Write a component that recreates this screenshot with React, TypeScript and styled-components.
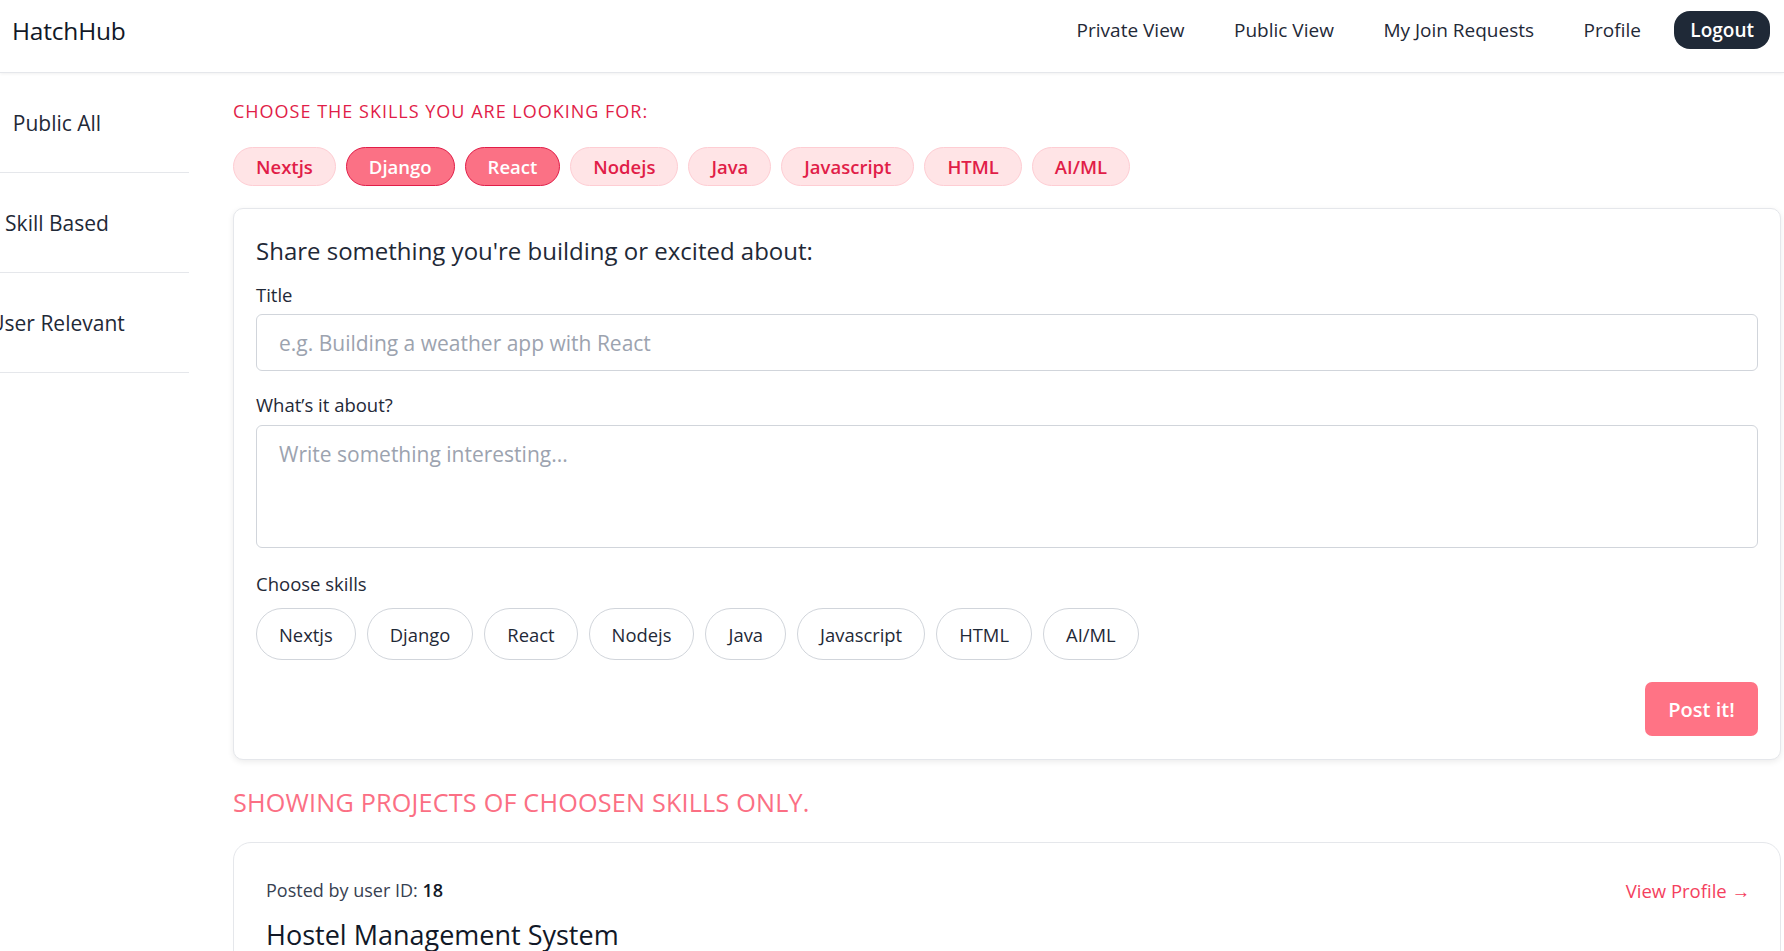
import React from "react";
import styled, { createGlobalStyle } from "styled-components";

const FONT = `"Open Sans", "Noto Sans", "Liberation Sans", sans-serif`;

const GlobalStyle = createGlobalStyle`
  html, body { margin: 0; padding: 0; background: #ffffff; }
  body { font-family: ${FONT}; color: #1f2937; }
  * { box-sizing: border-box; }
`;

const Header = styled.header`
  height: 73px;
  display: flex;
  align-items: flex-start;
  justify-content: space-between;
  padding: 11px 14px 0 12px;
  border-bottom: 1px solid #e5e7eb;
  box-shadow: 0 1px 3px rgba(0, 0, 0, 0.06);
  background: #fff;
`;

const Brand = styled.div`
  height: 38px;
  display: flex;
  align-items: center;
  font-size: 24.5px;
  font-weight: 500;
  color: #111827;
  letter-spacing: -0.2px;
`;

const Nav = styled.nav`
  display: flex;
  align-items: center;
  gap: 17.5px;
`;

const NavLink = styled.a<{ $dark?: boolean }>`
  font-size: 19px;
  color: ${(p) => (p.$dark ? "#ffffff" : "#1f2937")};
  background: ${(p) => (p.$dark ? "#1f2937" : "transparent")};
  padding: 0 16px;
  height: 38px;
  display: flex;
  align-items: center;
  border-radius: 16px;
  text-decoration: none;
  cursor: pointer;
  font-weight: ${(p) => (p.$dark ? 600 : 500)};
`;

const Layout = styled.div`
  display: flex;
  align-items: flex-start;
`;

const Sidebar = styled.aside`
  width: 189px;
  flex-shrink: 0;
  display: flex;
  flex-direction: column;
`;

const SideItem = styled.div`
  height: 100px;
  border-bottom: 1px solid #e5e7eb;
  display: flex;
  align-items: center;
`;

const SideLabel = styled.span`
  width: 114px;
  display: flex;
  justify-content: center;
  white-space: nowrap;
  font-size: 21px;
  color: #1f2937;
`;

const Main = styled.main`
  flex: 1;
  min-width: 0;
  padding: 24px 3px 40px 44px;
  display: flex;
  flex-direction: column;
`;

const FilterTitle = styled.h2`
  margin: 0;
  font-size: 18px;
  line-height: 28px;
  font-weight: 500;
  color: #e11d48;
  letter-spacing: 1px;
  text-transform: uppercase;
`;

const ChipRow = styled.div<{ $top: number; $gap: number }>`
  display: flex;
  flex-wrap: wrap;
  gap: ${(p) => p.$gap}px;
  margin-top: ${(p) => p.$top}px;
`;

const FilterChip = styled.button<{ $active?: boolean }>`
  font-family: ${FONT};
  height: 39px;
  padding: 0 22px;
  border-radius: 999px;
  font-size: 18.5px;
  font-weight: 600;
  cursor: pointer;
  border: 1px solid ${(p) => (p.$active ? "#e11d48" : "#fecdd3")};
  background: ${(p) => (p.$active ? "#fb7185" : "#ffe4e6")};
  color: ${(p) => (p.$active ? "#ffffff" : "#e11d48")};
`;

const Card = styled.section`
  margin-top: 22px;
  border: 1px solid #e5e7eb;
  border-radius: 10px;
  background: #fff;
  box-shadow: 0 2px 6px rgba(0, 0, 0, 0.08);
  padding: 24px 22px 23px 22px;
  display: flex;
  flex-direction: column;
`;

const CardTitle = styled.h3`
  margin: 0;
  font-size: 24px;
  line-height: 36px;
  font-weight: 500;
  color: #1f2937;
`;

const Label = styled.label<{ $top: number }>`
  display: block;
  margin-top: ${(p) => p.$top}px;
  font-size: 18.5px;
  line-height: 24px;
  font-weight: 500;
  color: #1f2937;
`;

const TextInput = styled.input`
  margin-top: 7px;
  width: 100%;
  height: 57px;
  padding: 0 22px;
  border: 1px solid #d1d5db;
  border-radius: 6px;
  font-family: ${FONT};
  font-size: 21px;
  color: #1f2937;
  outline: none;
  &::placeholder { color: #9ca3af; }
`;

const TextArea = styled.textarea`
  margin-top: 8px;
  width: 100%;
  height: 123px;
  padding: 13px 22px;
  border: 1px solid #d1d5db;
  border-radius: 6px;
  font-family: ${FONT};
  font-size: 21px;
  line-height: 30px;
  color: #1f2937;
  resize: none;
  outline: none;
  &::placeholder { color: #9ca3af; }
`;

const SkillChip = styled.button`
  font-family: ${FONT};
  height: 52px;
  padding: 0 22px;
  border-radius: 999px;
  border: 1px solid #d1d5db;
  background: #fff;
  font-size: 18.4px;
  color: #1f2937;
  cursor: pointer;
`;

const Actions = styled.div`
  display: flex;
  justify-content: flex-end;
  margin-top: 22px;
`;

const PostButton = styled.button`
  font-family: ${FONT};
  width: 113px;
  height: 54px;
  border: none;
  border-radius: 7px;
  background: #ff7385;
  color: #fff;
  font-size: 20px;
  font-weight: 600;
  cursor: pointer;
`;

const SectionTitle = styled.h2`
  margin: 26px 0 0 0;
  font-size: 25.2px;
  line-height: 32px;
  font-weight: 500;
  color: #fb6f84;
  letter-spacing: 0.2px;
`;

const ProjectCard = styled.article`
  margin-top: 24px;
  border: 1px solid #e5e7eb;
  border-radius: 18px;
  background: #fff;
  padding: 33px 30px 32px 32px;
  display: flex;
  flex-direction: column;
`;

const MetaRow = styled.div`
  display: flex;
  justify-content: space-between;
  align-items: center;
  height: 28px;
`;

const Meta = styled.span`
  font-size: 18px;
  color: #374151;
  b { font-weight: 600; color: #111827; }
`;

const ProfileLink = styled.a`
  font-size: 18.5px;
  color: #f43f5e;
  text-decoration: none;
  cursor: pointer;
`;

const ProjectTitle = styled.h3`
  margin: 13px 0 0 0;
  font-size: 27px;
  line-height: 36px;
  font-weight: 500;
  color: #111827;
`;

const ProjectText = styled.p`
  margin: 12px 0 0 0;
  font-size: 18px;
  line-height: 28px;
  color: #4b5563;
`;

const skills = ["Nextjs", "Django", "React", "Nodejs", "Java", "Javascript", "HTML", "AI/ML"];
const active = new Set(["Django", "React"]);

export default function App() {
  return (
    <>
      <GlobalStyle />
      <Header>
        <Brand>HatchHub</Brand>
        <Nav>
          <NavLink>Private View</NavLink>
          <NavLink>Public View</NavLink>
          <NavLink>My Join Requests</NavLink>
          <NavLink>Profile</NavLink>
          <NavLink $dark>Logout</NavLink>
        </Nav>
      </Header>
      <Layout>
        <Sidebar>
          <SideItem><SideLabel>Public All</SideLabel></SideItem>
          <SideItem><SideLabel>Skill Based</SideLabel></SideItem>
          <SideItem><SideLabel>User Relevant</SideLabel></SideItem>
        </Sidebar>
        <Main>
          <FilterTitle>Choose the skills you are looking for:</FilterTitle>
          <ChipRow $top={22} $gap={10}>
            {skills.map((s) => (
              <FilterChip key={s} $active={active.has(s)}>{s}</FilterChip>
            ))}
          </ChipRow>
          <Card>
            <CardTitle>Share something you're building or excited about:</CardTitle>
            <Label $top={14}>Title</Label>
            <TextInput placeholder="e.g. Building a weather app with React" />
            <Label $top={22}>What’s it about?</Label>
            <TextArea placeholder="Write something interesting..." />
            <Label $top={24}>Choose skills</Label>
            <ChipRow $top={12} $gap={11}>
              {skills.map((s) => (
                <SkillChip key={s}>{s}</SkillChip>
              ))}
            </ChipRow>
            <Actions>
              <PostButton>Post it!</PostButton>
            </Actions>
          </Card>
          <SectionTitle>SHOWING PROJECTS OF CHOOSEN SKILLS ONLY.</SectionTitle>
          <ProjectCard>
            <MetaRow>
              <Meta>Posted by user ID: <b>18</b></Meta>
              <ProfileLink>View Profile →</ProfileLink>
            </MetaRow>
            <ProjectTitle>Hostel Management System</ProjectTitle>
            <ProjectText>
              A platform to manage hostel rooms, allocations, fees and complaints for students and wardens.
            </ProjectText>
          </ProjectCard>
        </Main>
      </Layout>
    </>
  );
}
